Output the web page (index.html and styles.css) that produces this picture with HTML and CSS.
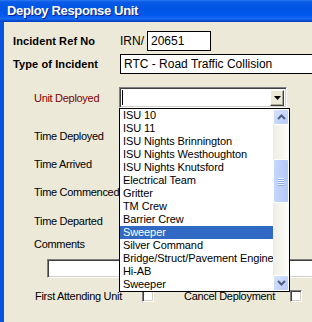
FILE: index.html
```html
<!DOCTYPE html>
<html lang="en">
<head>
  <meta charset="UTF-8" />
  <title>Deploy Response Unit</title>
  <link rel="stylesheet" href="styles.css">
</head>
<body>
  <div class="window">
    <div class="titlebar">Deploy Response Unit</div>

    <div class="form">
      <div class="row row-ref">
        <span class="label bold">Incident Ref No</span>
        <span class="prefix">IRN/</span>
        <div class="input ref">20651</div>
      </div>

      <div class="row row-type">
        <span class="label bold">Type of Incident</span>
        <div class="input type">RTC - Road Traffic Collision</div>
      </div>

      <div class="row row-unit">
        <span class="label indent red">Unit Deployed</span>
        <div class="combo">
          <div class="combo-field"><span class="caret"></span></div>
          <div class="combo-btn">
            <svg width="7" height="4" viewBox="0 0 7 4"><path d="M0 0h7L3.5 4z" fill="#000"/></svg>
          </div>

          <!-- open dropdown -->
          <div class="list">
            <ul class="items">
              <li>ISU 10</li>
              <li>ISU 11</li>
              <li>ISU Nights Brinnington</li>
              <li>ISU Nights Westhoughton</li>
              <li>ISU Nights Knutsford</li>
              <li>Electrical Team</li>
              <li>Gritter</li>
              <li>TM Crew</li>
              <li>Barrier Crew</li>
              <li class="selected">Sweeper</li>
              <li>Silver Command</li>
              <li>Bridge/Struct/Pavement Engine</li>
              <li>Hi-AB</li>
              <li>Sweeper</li>
            </ul>
            <div class="scrollbar">
              <div class="sb-btn">
                <svg width="9" height="6" viewBox="0 0 9 6"><path d="M1 5l3.5-3.5L8 5" fill="none" stroke="#4d6185" stroke-width="2"/></svg>
              </div>
              <div class="sb-track">
                <div class="sb-thumb">
                  <span></span><span></span><span></span><span></span>
                </div>
              </div>
              <div class="sb-btn">
                <svg width="9" height="6" viewBox="0 0 9 6"><path d="M1 1l3.5 3.5L8 1" fill="none" stroke="#4d6185" stroke-width="2"/></svg>
              </div>
            </div>
          </div>
        </div>
      </div>

      <div class="row row-deployed"><span class="label indent">Time Deployed</span></div>
      <div class="row row-arrived"><span class="label indent">Time Arrived</span></div>
      <div class="row row-commenced"><span class="label indent">Time Commenced</span></div>
      <div class="row row-departed"><span class="label indent">Time Departed</span></div>
      <div class="row row-comments"><span class="label indent">Comments</span></div>
      <div class="comments"></div>

      <div class="row row-checks">
        <span class="label indent first">First Attending Unit</span>
        <span class="check"></span>
        <span class="label cancel">Cancel Deployment</span>
        <span class="check"></span>
      </div>
    </div>
  </div>
</body>
</html>
```

FILE: styles.css
```css
* {
  margin: 0;
  padding: 0;
  box-sizing: border-box;
}

html, body {
  overflow: hidden;
}

body {
  font-family: 'Liberation Sans', Arial, sans-serif;
  font-size: 11px;
  color: #000;
  background: #ece9d8;
}

.window {
  width: 312px;
  height: 322px;
  display: flex;
  flex-direction: column;
  overflow: hidden;
}

.titlebar {
  height: 22px;
  flex-shrink: 0;
  padding-left: 7px;
  line-height: 21px;
  font-size: 13px;
  font-weight: bold;
  letter-spacing: -0.35px;
  color: #fff;
  text-shadow: 1px 1px 0 #0a1e8c;
  background: linear-gradient(#2b79f0 0, #0a5ae8 2px, #0054e3 9px, #0058ee 15px, #1a6af5 19px, #0048cf 21px, #003db0 22px);
}

.form {
  flex: 1;
  border-left: 4px solid #0853e0;
  padding: 9px 0 0 9px;
}

.row {
  display: flex;
  align-items: center;
  height: 20px;
  white-space: nowrap;
}

.row > * {
  flex-shrink: 0;
}

.label {
  letter-spacing: -0.3px;
}

.bold {
  font-weight: bold;
  letter-spacing: 0.1px;
  width: 107px;
}

.indent {
  margin-left: 21px;
}

.red {
  color: #800000;
  width: 85px;
}

.prefix {
  font-size: 12px;
  width: 27px;
}

.input {
  height: 20px;
  border: 1px solid #000;
  background: #fff;
  font-size: 12px;
  line-height: 18px;
  padding-left: 3px;
}

.input.ref {
  width: 64px;
}

.input.type {
  width: 220px;
}

.row-type { margin-top: 3px; }
.row-unit { margin-top: 13px; height: 21px; }
.row-deployed { margin-top: 18px; }
.row-arrived { margin-top: 8px; }
.row-commenced { margin-top: 8px; }
.row-departed { margin-top: 9px; }
.row-comments { margin-top: 3px; }

/* combo box */
.combo {
  position: relative;
  width: 168px;
  height: 21px;
  display: flex;
  align-items: center;
  background: #fff;
  border: 1px solid;
  border-color: #808080 #fff #fff #808080;
  box-shadow: inset 1px 1px #404040, inset -1px -1px #d4d0c8;
}

.combo-field {
  flex: 1;
  height: 100%;
  padding: 2px 0 0 2px;
}

.caret {
  display: block;
  width: 1px;
  height: 15px;
  background: #000;
}

.combo-btn {
  width: 14px;
  height: 16px;
  margin-right: 2px;
  display: flex;
  align-items: center;
  justify-content: center;
  background: #ece9d8;
  border: 1px solid;
  border-color: #fff #404040 #404040 #fff;
  box-shadow: inset -1px -1px #aca899;
}

.list {
  position: absolute;
  top: 20px;
  left: -1px;
  width: 171px;
  height: 184px;
  display: flex;
  background: #fff;
  border: 1px solid #000;
  z-index: 5;
}

.items {
  list-style: none;
  width: 153px;
  overflow: hidden;
}

.items li {
  height: 13px;
  line-height: 13px;
  padding-left: 3px;
  font-size: 11px;
  letter-spacing: -0.1px;
  white-space: nowrap;
}

.items li.selected {
  background: #316ac5;
  color: #fff;
}

.scrollbar {
  width: 16px;
  display: flex;
  flex-direction: column;
  background: linear-gradient(to right, #eeede5, #fdfdfa);
}

.sb-btn {
  height: 16px;
  display: flex;
  align-items: center;
  justify-content: center;
  border: 1px solid #fff;
  border-radius: 2px;
  background: linear-gradient(to bottom right, #d6e2fd, #b7cbf8);
}

.sb-track {
  flex: 1;
  padding-top: 34px;
}

.sb-thumb {
  height: 44px;
  border: 1px solid #fff;
  border-radius: 2px;
  background: linear-gradient(to right, #c6d7fd, #b4c9f8);
  display: flex;
  flex-direction: column;
  align-items: center;
  justify-content: center;
  gap: 1px;
}

.sb-thumb span {
  width: 6px;
  height: 1px;
  background: #eef3fe;
  box-shadow: 0 1px #8caaec;
}

/* comments box */
.comments {
  margin: 5px 0 0 34px;
  width: 300px;
  height: 19px;
  background: #fff;
  border: 1px solid;
  border-color: #808080 #fff #fff #808080;
  box-shadow: inset 1px 1px #404040, inset -1px -1px #d4d0c8;
}

.row-checks {
  margin-top: 8px;
}

.first {
  margin-left: 22px;
  width: 107px;
}

.check {
  width: 12px;
  height: 12px;
  background: #fff;
  border: 1px solid;
  border-color: #808080 #fff #fff #808080;
  box-shadow: inset 1px 1px #404040, inset -1px -1px #d4d0c8;
}

.cancel {
  margin-left: 30px;
  width: 106px;
}
```
